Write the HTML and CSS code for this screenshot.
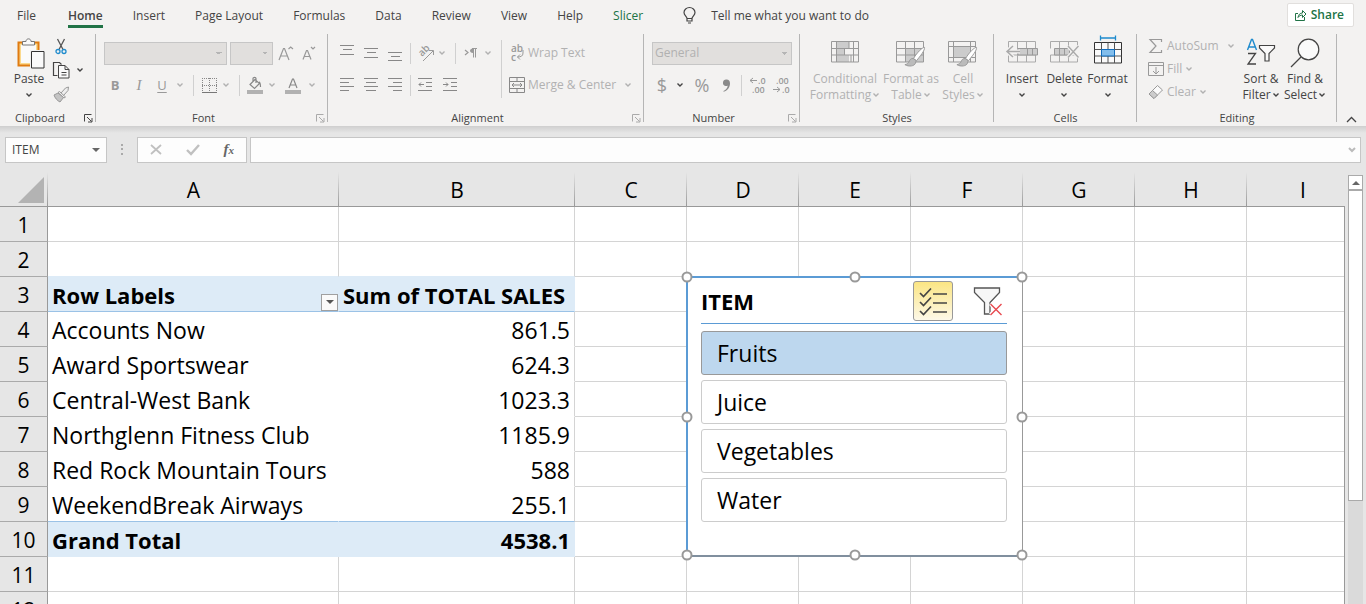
FILE: index.html
```html
<!DOCTYPE html>
<html lang="en">
<head>
<meta charset="utf-8">
<title>Spreadsheet</title>
<link rel="stylesheet" href="styles.css">
</head>
<body>
<svg class="defs" aria-hidden="true">
  <symbol id="chev" viewBox="0 0 8 6"><path d="M1.500 1.500 4 4l2.500-2.500" fill="none" stroke="currentColor" stroke-width="1.400"/></symbol>
  <symbol id="launch" viewBox="0 0 9 9"><path d="M.5 7.500V.5h7M3 3l4.500 4.500M8 4v4H4" fill="none" stroke="currentColor"/></symbol>
  <symbol id="brush" viewBox="0 0 24 22"><path d="M22.500 1C20 1 15 6 11 12.500l3 2.500C18 10 23 4 22.500 1Z" fill="#fff" stroke="#999"/><path d="M10.500 12.500c-3 0-3.500 2-4.500 4-.8 1.500-2 2-4 2.500 4 2.500 10 1.500 11-1.500.5-1.500.5-2.500.5-3Z" fill="#bbb" stroke="#999"/></symbol>
</svg>

<header class="ribbon">
  <nav class="tabs">
    <a class="tab tab-file" href="#">File</a>
    <a class="tab active" href="#">Home</a>
    <a class="tab" href="#">Insert</a>
    <a class="tab" href="#">Page Layout</a>
    <a class="tab" href="#">Formulas</a>
    <a class="tab" href="#">Data</a>
    <a class="tab" href="#">Review</a>
    <a class="tab" href="#">View</a>
    <a class="tab" href="#">Help</a>
    <a class="tab context" href="#">Slicer</a>
    <button class="tell">
      <svg width="13" height="17" viewBox="0 0 13 17"><path d="M4 11.500C4 9.500 1 8.500 1 5.500a5.500 5 0 0 1 11 0c0 3-3 4-3 6ZM4 11.500v2.500h5v-2.500M5 16h3" fill="none" stroke="#444" stroke-width="1.200"/></svg>
      Tell me what you want to do
    </button>
    <button class="share">
      <svg width="12" height="12" viewBox="0 0 12 12"><path d="M3 4.500H.5v7h9V8M3 8.500C3.500 5.500 5 4 7.500 4V1.500L11 5 7.500 8.500V6C5.500 6 4 7 3 8.500Z" fill="none" stroke="#217346"/></svg>
      Share
    </button>
  </nav>

  <div class="groups">
    <section class="group g-clipboard">
      <div class="body clip-body">
        <button class="big paste">
          <svg width="28" height="31" viewBox="0 0 28 31"><path d="M1.500 4.500h20v23h-20z" fill="#fbd98d" stroke="#e07b10" stroke-width="2"/><path d="M4 7h15v18H4z" fill="#fafafa"/><path d="M5.500 7V3.500h3.500c0-3.500 5-3.500 5 0h3.500V7Z" fill="#fafafa" stroke="#777"/><path d="M14 12h14v19H13V12z" fill="#f3f2f1"/><path d="M14.500 13.500h12.500v16.500H14.500z" fill="#fafafa" stroke="#333"/></svg>
          <span>Paste</span>
          <svg class="chev"><use href="#chev"/></svg>
        </button>
        <div class="clip-tools">
          <button class="ib" aria-label="Cut"><svg width="12" height="17" viewBox="0 0 12 17"><path d="M2.500 1 8 11.500M9.500 1 4 11.500" fill="none" stroke="#555" stroke-width="1.300"/><circle cx="3" cy="13.500" r="2" fill="none" stroke="#1e8bcd" stroke-width="1.300"/><circle cx="9" cy="13.500" r="2" fill="none" stroke="#1e8bcd" stroke-width="1.300"/></svg></button>
          <span></span>
          <button class="ib" aria-label="Copy"><svg width="17" height="17" viewBox="0 0 17 17"><path d="M4.500 13.500h-4v-13h6l2 2" fill="none" stroke="#444" stroke-width="1.200"/><path d="M5.500 3.500h6.500l4 4v8.500H5.500zM12 3.500v4h4M8.500 10.500h5M8.500 13h5" fill="#fafafa" stroke="#444"/></svg></button>
          <button class="ib" aria-label="Copy options"><svg class="chev"><use href="#chev"/></svg></button>
          <button class="ib" aria-label="Format painter" disabled><svg width="17" height="17" viewBox="0 0 17 17"><path d="m8 7 4.500-5 3-1-.5 3.500-4.500 5M6.500 5.500l6 5.500-1.500 1L5 6.500Z" fill="#eee" stroke="#999"/><path d="M5 7 1 9c1 3 3 5.500 6 7l3.500-4.500Z" fill="#c4c4c4" stroke="#999"/></svg></button>
        </div>
      </div>
      <div class="label">Clipboard<button class="launch on" aria-label="Clipboard settings"><svg><use href="#launch"/></svg></button></div>
    </section>

    <section class="group g-font">
      <div class="body two-rows">
        <div class="font-top">
          <select class="combo" aria-label="Font name" disabled><option></option></select>
          <select class="combo" aria-label="Font size" disabled><option></option></select>
          <button class="ib" aria-label="Increase font size" disabled><svg width="16" height="16" viewBox="0 0 16 16"><path d="M1 15 5.500 3.500h1L11 15M2.500 11h7M10.500 4l2.200-2L15 4" fill="none" stroke="#999" stroke-width="1.200"/></svg></button>
          <button class="ib" aria-label="Decrease font size" disabled><svg width="14" height="14" viewBox="0 0 14 14"><path d="M1 13.500 4.500 4.500h1L9 13.500M2.500 10.500h5M9 1l2 2 2-2" fill="none" stroke="#999" stroke-width="1.200"/></svg></button>
        </div>
        <div class="font-bottom">
          <button class="ib glyph b" disabled>B</button>
          <button class="ib glyph i" disabled>I</button>
          <button class="ib glyph u" disabled>U</button>
          <button class="ib" aria-label="Underline options" disabled><svg class="chev"><use href="#chev"/></svg></button>
          <span class="sep"></span>
          <button class="ib" aria-label="Borders" disabled><svg width="15" height="15" viewBox="0 0 15 15"><path d="M0 .5h15M.5 0v14M7.500 0v14M14.500 0v14M0 7.500h15" fill="none" stroke="#888" stroke-dasharray="1 1"/><path d="M0 14.500h15" stroke="#777"/></svg></button>
          <button class="ib" aria-label="Border options" disabled><svg class="chev"><use href="#chev"/></svg></button>
          <span class="sep"></span>
          <button class="ib" aria-label="Fill colour" disabled><svg width="16" height="17" viewBox="0 0 16 17"><path d="M8 2.500 3 7.500l4.500 4 5-5Zm-2 2V1.500c0-1.500 3-1.500 3 0V6M12 5c1 0 1.500 2 1.500 5" fill="none" stroke="#888" stroke-width="1.200"/><path d="M0 13h16v4H0z" fill="#b1b1b1"/></svg></button>
          <button class="ib" aria-label="Fill options" disabled><svg class="chev"><use href="#chev"/></svg></button>
          <button class="ib" aria-label="Font colour" disabled><svg width="16" height="17" viewBox="0 0 16 17"><path d="m4 11 3.500-9h1L12 11M5 8h6" fill="none" stroke="#888" stroke-width="1.200"/><path d="M0 13h16v4H0z" fill="#b1b1b1"/></svg></button>
          <button class="ib" aria-label="Font colour options" disabled><svg class="chev"><use href="#chev"/></svg></button>
        </div>
      </div>
      <div class="label">Font<button class="launch" aria-label="Font settings"><svg><use href="#launch"/></svg></button></div>
    </section>

    <section class="group g-align">
      <div class="body align-body">
        <div class="two-rows">
          <div class="align-top">
            <button class="ib" aria-label="Top align" disabled><svg class="al" viewBox="0 0 14 24"><path d="M0 4.500h14M3 8.500h9M0 13.500h14"/></svg></button>
            <button class="ib" aria-label="Middle align" disabled><svg class="al" viewBox="0 0 14 24"><path d="M0 7.500h14M3 11.500h9M0 16.500h14"/></svg></button>
            <button class="ib" aria-label="Bottom align" disabled><svg class="al" viewBox="0 0 14 24"><path d="M0 11.500h14M3 15.500h9M0 19.500h14"/></svg></button>
            <span class="sep"></span>
            <button class="ib" aria-label="Orientation" disabled><svg width="17" height="17" viewBox="0 0 17 17"><text x="0" y="0" transform="translate(5 12) rotate(-45)" class="tiny">ab</text><path d="M6 16 16 6M12 5.500h4.500V10" fill="none" stroke="#999"/></svg></button>
            <button class="ib" aria-label="Orientation options" disabled><svg class="chev"><use href="#chev"/></svg></button>
            <span class="sep"></span>
            <button class="ib" aria-label="Text direction" disabled><svg width="14" height="12" viewBox="0 0 14 12"><path d="m1 3 3 2.500L1 8" fill="none" stroke="#999" stroke-width="1.200"/><path d="M9 1.500c-4 0-4 4.500 0 4.500Z" fill="#999"/><path d="M8 1.500h5M9.500 1.500v9M11.500 1.500v9" stroke="#999"/></svg></button>
            <button class="ib" aria-label="Direction options" disabled><svg class="chev"><use href="#chev"/></svg></button>
          </div>
          <div class="align-bottom">
            <button class="ib" aria-label="Align left" disabled><svg class="al" viewBox="0 0 14 24"><path d="M0 5.500h14M0 9.500h9M0 13.500h14M0 17.500h9"/></svg></button>
            <button class="ib" aria-label="Centre" disabled><svg class="al" viewBox="0 0 14 24"><path d="M0 5.500h14M2 9.500h10M0 13.500h14M2 17.500h10"/></svg></button>
            <button class="ib" aria-label="Align right" disabled><svg class="al" viewBox="0 0 14 24"><path d="M0 5.500h14M5 9.500h9M0 13.500h14M5 17.500h9"/></svg></button>
            <span class="sep"></span>
            <button class="ib" aria-label="Decrease indent" disabled><svg class="al" viewBox="0 0 14 24"><path d="M0 5.500h14M8 9.500h6M8 13.500h6M0 17.500h14M1 11.500h5M3 9.500l-2 2 2 2"/></svg></button>
            <button class="ib" aria-label="Increase indent" disabled><svg class="al" viewBox="0 0 14 24"><path d="M0 5.500h14M8 9.500h6M8 13.500h6M0 17.500h14M0 11.500h5M3 9.500l2 2-2 2"/></svg></button>
          </div>
        </div>
        <span class="tall-sep"></span>
        <div class="two-rows">
          <button class="wide" disabled><svg width="16" height="20" viewBox="0 0 16 20"><text x="2" y="9" class="tiny">ab</text><text x="2" y="18" class="tiny">c</text><path d="M14 7v3c0 3-2 4-5.500 4M11 11.500 8.500 14l2.500 2.500" fill="none" stroke="#999"/></svg>Wrap Text</button>
          <button class="wide" disabled><svg width="16" height="16" viewBox="0 0 16 16"><path d="M.5.5h15v15H.5zM.5 4.500h15M.5 11.500h15M8 .5v4M8 11.500v4M3 8h10M5 6 3 8l2 2M11 6l2 2-2 2" fill="none" stroke="#888"/></svg>Merge &amp; Center<svg class="chev far"><use href="#chev"/></svg></button>
        </div>
      </div>
      <div class="label">Alignment<button class="launch" aria-label="Alignment settings"><svg><use href="#launch"/></svg></button></div>
    </section>

    <section class="group g-number">
      <div class="body two-rows">
        <div class="num-top"><select class="combo" aria-label="Number format" disabled><option>General</option></select></div>
        <div class="num-bottom">
          <button class="ib glyph sym" disabled>$</button>
          <button class="ib" aria-label="Currency options"><svg class="chev"><use href="#chev"/></svg></button>
          <button class="ib glyph sym" disabled>%</button>
          <button class="ib" aria-label="Comma style" disabled><svg width="9" height="13" viewBox="0 0 9 13"><path d="M4.500.5a3.300 3.300 0 0 0-1 6.500c1 .3 2-.1 2.300-.5C5.500 9 4 11 1.500 12v.7C6 11.500 8 8 8 4.500 8 2 6.800.5 4.500.5Z" fill="#8a8a8a"/></svg></button>
          <span class="sep"></span>
          <button class="ib" aria-label="Increase decimal" disabled><svg width="17" height="20" viewBox="0 0 17 20"><text x="9" y="9" class="dec">.0</text><text x="3" y="18" class="dec">.00</text><path d="M1 5.500h7M4 3 1 5.500 4 8" fill="none" stroke="#999"/></svg></button>
          <button class="ib" aria-label="Decrease decimal" disabled><svg width="17" height="20" viewBox="0 0 17 20"><text x="3" y="9" class="dec">.00</text><text x="9" y="18" class="dec">.0</text><path d="M0 14.500h7M4 12l3 2.500L4 17" fill="none" stroke="#999"/></svg></button>
        </div>
      </div>
      <div class="label">Number<button class="launch" aria-label="Number settings"><svg><use href="#launch"/></svg></button></div>
    </section>

    <section class="group g-styles">
      <div class="body styles-body">
        <button class="big" disabled><svg width="28" height="28" viewBox="0 0 28 28"><path d="M5 3h13v21H5z" fill="#ccc"/><path d="M13 10h7v7h-7z" fill="#f3f2f1"/><path d="M.5 3.500h27v20.500H.5zM.5 10.500h27M.5 17h27M5.500 3.500V24M18 3.500v7M13.500 10.500V17M20 17v7M22.500 3.500V24" fill="none" stroke="#999"/></svg>
          <span>Conditional</span><span>Formatting <svg class="chev"><use href="#chev"/></svg></span></button>
        <button class="big" disabled><svg width="30" height="28" viewBox="0 0 30 28"><path d="M10 10h18v14H10z" fill="#ccc"/><path d="M.5 3.500h27v20.500H.5zM.5 10.500h27M.5 17h27M9.500 3.500V24M18.500 3.500V24" fill="none" stroke="#999"/><use href="#brush" x="7" y="8" width="23" height="22"/></svg>
          <span>Format as</span><span>Table <svg class="chev"><use href="#chev"/></svg></span></button>
        <button class="big" disabled><svg width="30" height="28" viewBox="0 0 30 28"><path d="M5 8h18v11H5z" fill="#ccc"/><path d="M.5 3.500h27v20.500H.5zM.5 8.500h27M.5 19.500h27M5.500 3.500V24M22.500 3.500V24" fill="none" stroke="#999"/><use href="#brush" x="7" y="8" width="23" height="22"/></svg>
          <span>Cell</span><span>Styles <svg class="chev"><use href="#chev"/></svg></span></button>
      </div>
      <div class="label">Styles</div>
    </section>

    <section class="group g-cells">
      <div class="body cells-body">
        <button class="big"><svg width="32" height="28" viewBox="0 0 32 28"><path d="M2.500 3.500h27v20.500h-27zM11.500 3.500V24M20.500 3.500V24M2.500 17h27" fill="#f3f2f1" stroke="#aaa"/><path d="M12 10.500h19.500V17H12z" fill="#ccc" stroke="#999"/><path d="M21.500 10.500V17M26.500 10.500V17" stroke="#999"/><path d="M1 13.500h13M7 8l-6 5.500L7 19" fill="none" stroke="#f3f2f1" stroke-width="4"/><path d="M1 13.500h13M7 8l-6 5.500L7 19" fill="none" stroke="#aaa" stroke-width="1.500"/></svg>
          <span>Insert</span><svg class="chev"><use href="#chev"/></svg></button>
        <button class="big"><svg width="32" height="28" viewBox="0 0 32 28"><path d="M2.500 10.500v-7h27v7M29.500 17v7h-27v-7h27M11.500 3.500V24M20.500 3.500V24" fill="none" stroke="#aaa"/><path d="M6.500 10.500h15V17h-15z" fill="#ccc" stroke="#999"/><path d="M11.500 10.500V17M16.500 10.500V17" stroke="#999"/><path d="m20 8 10.500 11.500M30.500 8 20 19.500" stroke="#f3f2f1" stroke-width="4"/><path d="m20 8 10.500 11.500M30.500 8 20 19.500" stroke="#aaa" stroke-width="1.400"/></svg>
          <span>Delete</span><svg class="chev"><use href="#chev"/></svg></button>
        <button class="big format"><svg width="28" height="32" viewBox="0 0 28 32"><path d="M7 3h14M6.500.5v5M21.500.5v5" stroke="#1e8bcd" stroke-width="1.300"/><path d="M.5 7.500h27V28H.5z" fill="#fafafa" stroke="#333"/><path d="M7.500 7.500V28M20.500 7.500V28M.5 14.500h27M.5 21h27M14 7.500V14M14 21v7" stroke="#555" fill="none"/><path d="M7.500 14.500h13V21h-13z" fill="#83beec" stroke="#0f6cbd"/></svg>
          <span>Format</span><svg class="chev"><use href="#chev"/></svg></button>
      </div>
      <div class="label">Cells</div>
    </section>

    <section class="group g-edit">
      <div class="body edit-body">
        <div class="edit-list">
          <button class="wide" disabled><svg width="16" height="16" viewBox="0 0 16 16"><path d="M13.500 4V1.500H2L8 8l-6 6.500h11.500V12" fill="none" stroke="#999" stroke-width="1.200"/></svg>AutoSum<svg class="chev far"><use href="#chev"/></svg></button>
          <button class="wide" disabled><svg width="16" height="16" viewBox="0 0 16 16"><path d="M.5 1.500h15v13H.5zM.5 4.500h15M8 6v7M5 10l3 3 3-3" fill="none" stroke="#999"/></svg>Fill<svg class="chev"><use href="#chev"/></svg></button>
          <button class="wide" disabled><svg width="16" height="16" viewBox="0 0 16 16"><path d="M1 10 9.500 1.500l5 4.500L6 14.500Z" fill="#fafafa" stroke="#999"/><path d="m1 10 3.500-3.500 5 4.500L6 14.500Z" fill="#ccc" stroke="#999"/></svg>Clear<svg class="chev"><use href="#chev"/></svg></button>
        </div>
        <button class="big"><svg width="30" height="28" viewBox="0 0 30 28"><path d="m1.500 12 4-10.500h1l4 10.500M3 9h6" fill="none" stroke="#1e8bcd" stroke-width="1.400"/><path d="M2 15.500h7.500L2 26h8" fill="none" stroke="#444" stroke-width="1.300"/><path d="M13.500 7.500h15V10l-5.500 5.500V23h-4v-7.500L13.500 10Z" fill="#fafafa" stroke="#444" stroke-width="1.200"/></svg>
          <span>Sort &amp;</span><span>Filter <svg class="chev"><use href="#chev"/></svg></span></button>
        <button class="big find"><svg width="30" height="30" viewBox="0 0 30 30"><circle cx="18.500" cy="11.500" r="10.300" fill="#fafafa" stroke="#444" stroke-width="1.200"/><path d="M11 19 1 29" stroke="#444" stroke-width="1.300"/></svg>
          <span>Find &amp;</span><span>Select <svg class="chev"><use href="#chev"/></svg></span></button>
      </div>
      <div class="label">Editing</div>
    </section>
    <button class="collapse" aria-label="Collapse the ribbon"><svg width="11" height="7" viewBox="0 0 11 7"><path d="m1 6 4.500-4.500L10 6" fill="none" stroke="#444" stroke-width="1.300"/></svg></button>
  </div>
</header>

<div class="formula-bar">
  <div class="box name-box"><input aria-label="Name box" value="ITEM"><button aria-label="Names"><svg width="8" height="4"><path d="M0 0h8L4 4Z" fill="#666"/></svg></button></div>
  <svg class="dots" width="2" height="11"><path d="M0 0h2v2H0zM0 4h2v2H0zM0 9h2v2H0z" fill="#aaa"/></svg>
  <div class="box fx-box">
    <button aria-label="Cancel"><svg width="12" height="11"><path d="m1 1 10 9M11 1 1 10" stroke="#c0c0c0" stroke-width="1.800"/></svg></button>
    <button aria-label="Enter"><svg width="14" height="11"><path d="m1 6 4 4 8-9" fill="none" stroke="#c0c0c0" stroke-width="2.400"/></svg></button>
    <button class="fx">f<span>x</span></button>
  </div>
  <div class="box formula"><input aria-label="Formula"><button aria-label="Expand formula bar"><svg width="8" height="6"><path d="m1 1 3 3 3-3" fill="none" stroke="#bbb" stroke-width="2"/></svg></button></div>
</div>

<main class="work">
  <div class="sheet">
    <table>
      <colgroup><col class="c-row"><col class="c-a"><col class="c-b"><col class="c"><col class="c"><col class="c"><col class="c"><col class="c"><col class="c"><col class="c"></colgroup>
      <thead><tr><th class="corner"><svg width="26" height="26"><path d="M26 0v26H0Z" fill="#b3b3b3"/></svg></th><th>A</th><th>B</th><th>C</th><th>D</th><th>E</th><th>F</th><th>G</th><th>H</th><th>I</th></tr></thead>
      <tbody>
        <tr><th>1</th><td></td><td></td><td></td><td></td><td></td><td></td><td></td><td></td><td></td></tr>
        <tr class="before"><th>2</th><td></td><td></td><td></td><td></td><td></td><td></td><td></td><td></td><td></td></tr>
        <tr class="pv head"><th>3</th><td><div class="field">Row Labels<button class="drop" aria-label="Filter row labels"><svg width="8" height="4"><path d="M0 0h8L4 4Z" fill="#555"/></svg></button></div></td><td>Sum of TOTAL SALES</td><td></td><td></td><td></td><td></td><td></td><td></td><td></td></tr>
        <tr class="pv"><th>4</th><td>Accounts Now</td><td>861.5</td><td></td><td></td><td></td><td></td><td></td><td></td><td></td></tr>
        <tr class="pv"><th>5</th><td>Award Sportswear</td><td>624.3</td><td></td><td></td><td></td><td></td><td></td><td></td><td></td></tr>
        <tr class="pv"><th>6</th><td>Central-West Bank</td><td>1023.3</td><td></td><td></td><td></td><td></td><td></td><td></td><td></td></tr>
        <tr class="pv"><th>7</th><td>Northglenn Fitness Club</td><td>1185.9</td><td></td><td></td><td></td><td></td><td></td><td></td><td></td></tr>
        <tr class="pv"><th>8</th><td>Red Rock Mountain Tours</td><td>588</td><td></td><td></td><td></td><td></td><td></td><td></td><td></td></tr>
        <tr class="pv last"><th>9</th><td>WeekendBreak Airways</td><td>255.1</td><td></td><td></td><td></td><td></td><td></td><td></td><td></td></tr>
        <tr class="pv total"><th>10</th><td>Grand Total</td><td>4538.1</td><td></td><td></td><td></td><td></td><td></td><td></td><td></td></tr>
        <tr><th>11</th><td></td><td></td><td></td><td></td><td></td><td></td><td></td><td></td><td></td></tr>
        <tr><th>12</th><td></td><td></td><td></td><td></td><td></td><td></td><td></td><td></td><td></td></tr>
      </tbody>
    </table>
    <section class="slicer">
      <header class="slicer-head">
        <h2>ITEM</h2>
        <button class="multi" aria-label="Multi-select"><svg width="28" height="28" viewBox="0 0 28 28"><path d="m1 6 3.500 3.500L12 1.500M1 15l3.500 3.500L12 10.500M1 24l3.500 3.500L12 19.500" fill="none" stroke="#444" stroke-width="1.700"/><path d="M14 7h14M14 16h14M14 25h14" stroke="#444" stroke-width="1.700"/></svg></button>
        <button class="clear" aria-label="Clear filter"><svg width="30" height="30" viewBox="0 0 30 30"><path d="M1.500 2h25v4.500L17 16.500V28h-5.500V16.500L1.500 6.500Z" fill="#f7f7f7" stroke="#555" stroke-width="1.300"/><path d="m17.500 17.500 11 11.500M28.500 17.500 17.500 29" stroke="#fff" stroke-width="4"/><path d="m17.500 18 11 11M28.500 18l-11 11" stroke="#e8494f" stroke-width="1.400"/></svg></button>
      </header>
      <div class="items">
        <button class="item selected">Fruits</button>
        <button class="item">Juice</button>
        <button class="item">Vegetables</button>
        <button class="item">Water</button>
      </div>
      <i class="h nw"></i><i class="h n"></i><i class="h ne"></i><i class="h w"></i><i class="h e"></i><i class="h sw"></i><i class="h s"></i><i class="h se"></i>
    </section>
  </div>
  <div class="scroll">
    <button class="up" aria-label="Scroll up"><svg width="8" height="4"><path d="M0 4h8L4 0Z" fill="#666"/></svg></button>
    <div class="thumb"></div>
  </div>
</main>
</body>
</html>
```

FILE: styles.css
```css
* { box-sizing: border-box; }
body {
  margin: 0;
  height: 100vh;
  display: flex;
  flex-direction: column;
  overflow: hidden;
  background: #e6e6e6;
  color: #444;
  font: 12px/16px "Open Sans", "Noto Sans", sans-serif;
}
svg { flex: none; display: block; overflow: visible; }
.defs { position: absolute; width: 0; height: 0; }
button, input, select { font: inherit; color: inherit; }
button { border: 0; background: none; padding: 0; white-space: nowrap; }
button:disabled { color: #b1b1b1; }

/* ribbon */
.ribbon { background: #f3f2f1; border-bottom: 1px solid #d0d0d0; }
.tabs { display: flex; align-items: flex-start; height: 34px; padding: 3px 12px 0 17px; gap: 30px; }
.tab { color: #444; text-decoration: none; padding: 5px 0 1px; white-space: nowrap; }
.tab-file { margin-right: 2px; }
.tab.active { font-weight: 600; border-bottom: 3px solid #217346; }
.tab.context { color: #217346; }
.tell { display: flex; gap: 15px; align-items: center; margin-left: 10px; padding-top: 4px; }
.share {
  display: flex; align-items: center; gap: 4px; margin-left: auto; height: 24px; padding: 0 9px 0 7px;
  background: #fff; border: 1px solid #e1dfdd; border-radius: 2px; color: #217346; font-weight: 600;
}
.groups { display: flex; }
.group {
  flex: none; height: 92px; display: flex; flex-direction: column;
  background: linear-gradient(#b5b5b5, #b5b5b5) no-repeat right top / 1px 88px;
}
.body { flex: 1; }
.label { position: relative; text-align: center; height: 16px; font-size: 11px; }
.launch { position: absolute; right: 3px; top: 4px; color: #aaa; }
.launch.on { color: #444; }
.launch svg { width: 9px; height: 9px; }
.chev { width: 8px; height: 6px; }
.ib { display: grid; place-items: center; height: 24px; }
.sep { width: 1px; height: 21px; background: #d0d0d0; }
.two-rows { display: grid; grid-template-rows: 38px 26px; align-content: start; }
.two-rows > * { display: grid; align-items: center; justify-items: center; justify-content: start; }

.g-clipboard { width: 96px; }
.g-clipboard .label { padding-right: 16px; }
.clip-body { display: flex; padding-left: 12px; }
.big { display: flex; flex-direction: column; align-items: center; height: 73px; }
.big > svg:first-child { margin: 4px 0 5px; }
.big > span { display: flex; align-items: center; gap: 1px; }
.big > .chev { margin-top: 5px; }
.big.paste { width: 34px; }
.big.paste > svg:first-child { margin: 4px 0 2px 3px; }
.clip-tools { display: grid; grid-template: repeat(3, 24px) / 30px 8px; place-items: center; }

.combo {
  appearance: none; width: 100%; height: 23px; padding: 0 2px; border: 1px solid #c6c6c6; border-radius: 0;
  color: #b1b1b1; opacity: 1;
  background-color: #e1dfdd;
  background-image: linear-gradient(to bottom left, #b5b5b5 50%, transparent 50%), linear-gradient(to bottom right, #b5b5b5 50%, transparent 50%);
  background-repeat: no-repeat;
  background-size: 3px 3px;
  background-position: right 7px center, right 4px center;
}
.g-font { width: 232px; }
.g-font .body { padding-left: 7px; }
.g-font .label, .g-align .label, .g-number .label { padding-right: 17px; }
.font-top { grid-template-columns: 123px 43px 20px 20px; column-gap: 3px; padding-left: 1px; }
.font-bottom { grid-template-columns: 24px 24px 22px 14px 12px 20px 14px 12px 20px 14px 28px 10px; }
.glyph { font-size: 13px; }
.glyph:disabled { color: #999; }
.b { font-weight: 700; }
.i { font-style: italic; font-family: "Liberation Serif", serif; font-size: 15px; }
.u { text-decoration: underline; text-underline-offset: 2px; }
.sym { font-size: 18px; }

.g-align { width: 316px; }
.align-body { display: flex; padding-left: 7px; }
.al { width: 14px; height: 24px; fill: none; stroke: #888; }
.align-top { grid-template-columns: 24px 24px 24px 6px 24px 10px 16px 16px 18px; }
.align-bottom { grid-template-columns: 24px 24px 24px 6px 24px 26px; }
.tall-sep { width: 1px; height: 58px; margin: 6px 7px 0 4px; background: #d0d0d0; }
.tiny { font: 600 10px "Open Sans", sans-serif; fill: #999; }
.dec { font: 600 9px "Open Sans", sans-serif; fill: #999; }
.wide, .two-rows > .wide { display: flex; align-items: center; gap: 3px; }
.chev.far { margin-left: 5px; }

.g-number { width: 156px; }
.g-number .body { padding-left: 8px; }
.num-top { grid-template-columns: 140px; }
.num-bottom { grid-template-columns: 20px 16px 28px 20px 10px 22px 26px; }

.g-styles { width: 194px; }
.styles-body { display: grid; grid-template-columns: 82px 50px 54px; padding-left: 4px; justify-items: center; }
.g-cells { width: 143px; }
.cells-body { display: grid; grid-template-columns: 42px 43px 43px; padding-left: 7px; justify-items: center; }
.big.format > svg:first-child { margin: 1px 0 4px; }
.g-edit { width: 200px; }
.edit-body { display: grid; grid-template-columns: 91px 44px 44px; padding-left: 11px; }
.edit-list { display: grid; grid-template-rows: repeat(3, 23px); }
.big.find > svg:first-child { margin: 4px 0 3px; }
.collapse { margin: 0 auto; align-self: flex-end; height: 14px; }

/* formula bar */
.formula-bar {
  display: flex; align-items: center; height: 45px; padding: 0 5px;
  background: linear-gradient(#d2d2d2, #e6e6e6 6px);
}
.box { display: flex; align-items: center; height: 26px; background: #fdfdfd; border: 1px solid #c6c6c6; }
.box input { flex: 1; min-width: 0; border: 0; background: none; outline: 0; padding: 0; }
.name-box { width: 102px; padding: 0 6px; }
.dots { margin: 0 14px; }
.fx-box { width: 110px; justify-content: space-around; margin-right: 3px; }
.fx { font: italic 700 15px/20px "Liberation Serif", serif; color: #666; }
.fx span { font-size: 11px; }
.formula { flex: 1; padding: 0 4px; }

/* sheet */
.work { flex: 1; min-height: 0; display: flex; }
.sheet { flex: 1; min-width: 0; position: relative; overflow: hidden; }
.sheet::after { content: ""; position: absolute; top: 34px; right: 0; bottom: 0; width: 1px; background: #999; }
table { border-collapse: separate; border-spacing: 0; table-layout: fixed; width: 1359px; color: #000; font: 23px/26px "Open Sans", sans-serif; }
.c-row { width: 48px; }
.c-a { width: 291px; }
.c-b { width: 236px; }
.c { width: 112px; }
th { font: 21px/26px "Open Sans", sans-serif; background: #e6e6e6; padding: 2px 0 0; border-right: 1px solid #999; border-bottom: 1px solid #aaa; }
thead th {
  height: 35px; border-right: 0; border-bottom-color: #999;
  background: linear-gradient(#e6e6e6, #999) no-repeat right / 1px 100% #e6e6e6;
}
.corner svg { margin: 0 0 0 18px; }
td { height: 35px; padding: 1px 4px 0; white-space: nowrap; background: #fff; border-right: 1px solid #d4d4d4; border-bottom: 1px solid #d4d4d4; }
.before td:nth-child(-n+3) { border-bottom-color: #ddebf7; }
.pv td:nth-child(2) { border-color: #fff; }
.pv td:nth-child(3) { text-align: right; border-bottom-color: #fff; }
.pv.head td:nth-child(-n+3), .pv.total td:nth-child(-n+3) { background: #ddebf7; border-color: #ddebf7; font-weight: 700; font-size: 22px; }
.pv.head td:nth-child(3) { text-align: left; }
.pv.head td:nth-child(-n+3), .pv.last td:nth-child(-n+3) { border-bottom-color: #9bc2e6; }
.field { position: relative; }
.drop { position: absolute; right: -4px; top: 12px; width: 17px; height: 17px; display: grid; place-items: center; background: #fafafa; border: 1px solid #a0a0a0; }

/* slicer floats over the cells */
.slicer {
  position: absolute; left: 686px; top: 104px; width: 337px; padding: 1px 15px 33px 13px;
  background: #fff; border: 1px solid #999; border-left: 2px solid #5b9bd5; border-top: 2px solid #5b9bd5; border-bottom: 2px solid #808f9e;
  color: #000; font: 23px/26px "Open Sans", sans-serif;
}
.slicer-head { display: flex; align-items: center; height: 45px; padding-bottom: 1px; border-bottom: 1px solid #5b9bd5; margin-bottom: 7px; }
.slicer h2 { margin: 0; flex: 1; font-size: 22px; font-weight: 700; }
.multi { display: grid; place-items: center; width: 40px; height: 40px; border: 1px solid #999; border-radius: 3px; background: linear-gradient(#fbe583, #fdf8e8); margin-right: 20px; }
.clear { margin-right: 4px; }
.items { display: grid; gap: 5px; }
.item { height: 44px; padding: 0 15px; text-align: left; background: #fff; border: 1px solid #ccc; border-radius: 3px; }
.item.selected { background: #bdd7ee; border-color: #999; }
.h { position: absolute; width: 11px; height: 11px; border: 2px solid #999; border-radius: 50%; background: #fff; transform: translate(-50%, -50%); }
.nw, .w, .sw { left: -1px; }
.n, .s { left: 50%; }
.ne, .e, .se { left: 100%; }
.nw, .n, .ne { top: -1px; }
.w, .e { top: 50%; }
.sw, .s, .se { top: 100%; }

.scroll { width: 15px; margin: 3px 3px 0; display: flex; flex-direction: column; background: #dadada; }
.up { display: grid; place-items: center; height: 15px; background: #fff; border: 1px solid #aaa; }
.thumb { height: 311px; background: #fff; border: 1px solid #aaa; }
```
